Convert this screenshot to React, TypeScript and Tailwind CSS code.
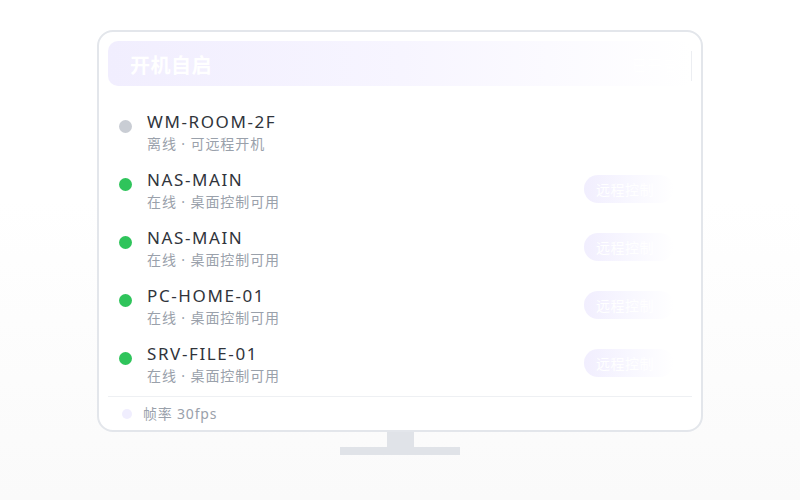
import React from "react";

const rows = [
  { name: "WM-ROOM-2F", sub: "离线 · 可远程开机", online: false },
  { name: "NAS-MAIN", sub: "在线 · 桌面控制可用", online: true },
  { name: "NAS-MAIN", sub: "在线 · 桌面控制可用", online: true },
  { name: "PC-HOME-01", sub: "在线 · 桌面控制可用", online: true },
  { name: "SRV-FILE-01", sub: "在线 · 桌面控制可用", online: true },
];

export default function App() {
  return (
    <div
      className="w-[800px] h-[500px] flex flex-col items-center pt-[30px] bg-gradient-to-b from-white from-[40%] to-[#fafafa]"
      style={{ fontFamily: '"Noto Sans", "Noto Sans CJK SC", sans-serif' }}
    >
      <div className="w-[606px] h-[402px] border-2 border-[#e3e6eb] rounded-[16px] bg-white pt-[9px] px-[9px] flex flex-col">
        <div className="h-[45px] rounded-[10px] bg-gradient-to-r from-[#f1eefe] via-[#f7f5ff] to-white flex items-center pl-[22px] pt-[4px]">
          <span className="text-white font-bold text-[20px] tracking-[0.5px]">开机自启</span>
          <span className="ml-auto mr-[14px] text-white text-[15px]">已开启</span>
          <div className="w-px h-[30px] bg-[#eceef2]" />
        </div>
        <div className="flex flex-col pt-[18px] px-[11px]">
          {rows.map((r, i) => (
            <div key={i} className="h-[58px] flex items-start pt-[6px]">
              <div className={`mt-[10px] w-[13px] h-[13px] rounded-full shrink-0 ${r.online ? "bg-[#2fc45b]" : "bg-[#c9cdd4]"}`} />
              <div className="ml-[15px] flex flex-col flex-1">
                <span className="text-[17px] leading-[24px] text-[#30343b] tracking-[1.6px]">{r.name}</span>
                <span className="text-[14px] leading-[20px] text-[#9aa1ab] tracking-[0.9px]">{r.sub}</span>
              </div>
              {r.online && (
                <div className="mt-[7px] w-[90px] h-[28px] mr-[7px] rounded-full bg-gradient-to-r from-[#f1eefe] via-[#f8f7ff] to-white flex items-center px-[12px]">
                  <span className="text-white text-[14px] tracking-[0.5px]">远程控制</span>
                </div>
              )}
            </div>
          ))}
        </div>
        <div className="mt-[2px] border-t border-[#eef0f3] flex items-center flex-1 px-[14px]">
          <div className="w-[10px] h-[10px] rounded-full bg-[#f0eefe]" />
          <span className="ml-[11px] text-[14px] text-[#9aa1ab] tracking-[0.8px]">帧率 30fps</span>
        </div>
      </div>
      <div className="w-[27px] h-[15px] bg-[#e0e3e8]" />
      <div className="w-[120px] h-[8px] bg-[#e0e3e8]" />
    </div>
  );
}
